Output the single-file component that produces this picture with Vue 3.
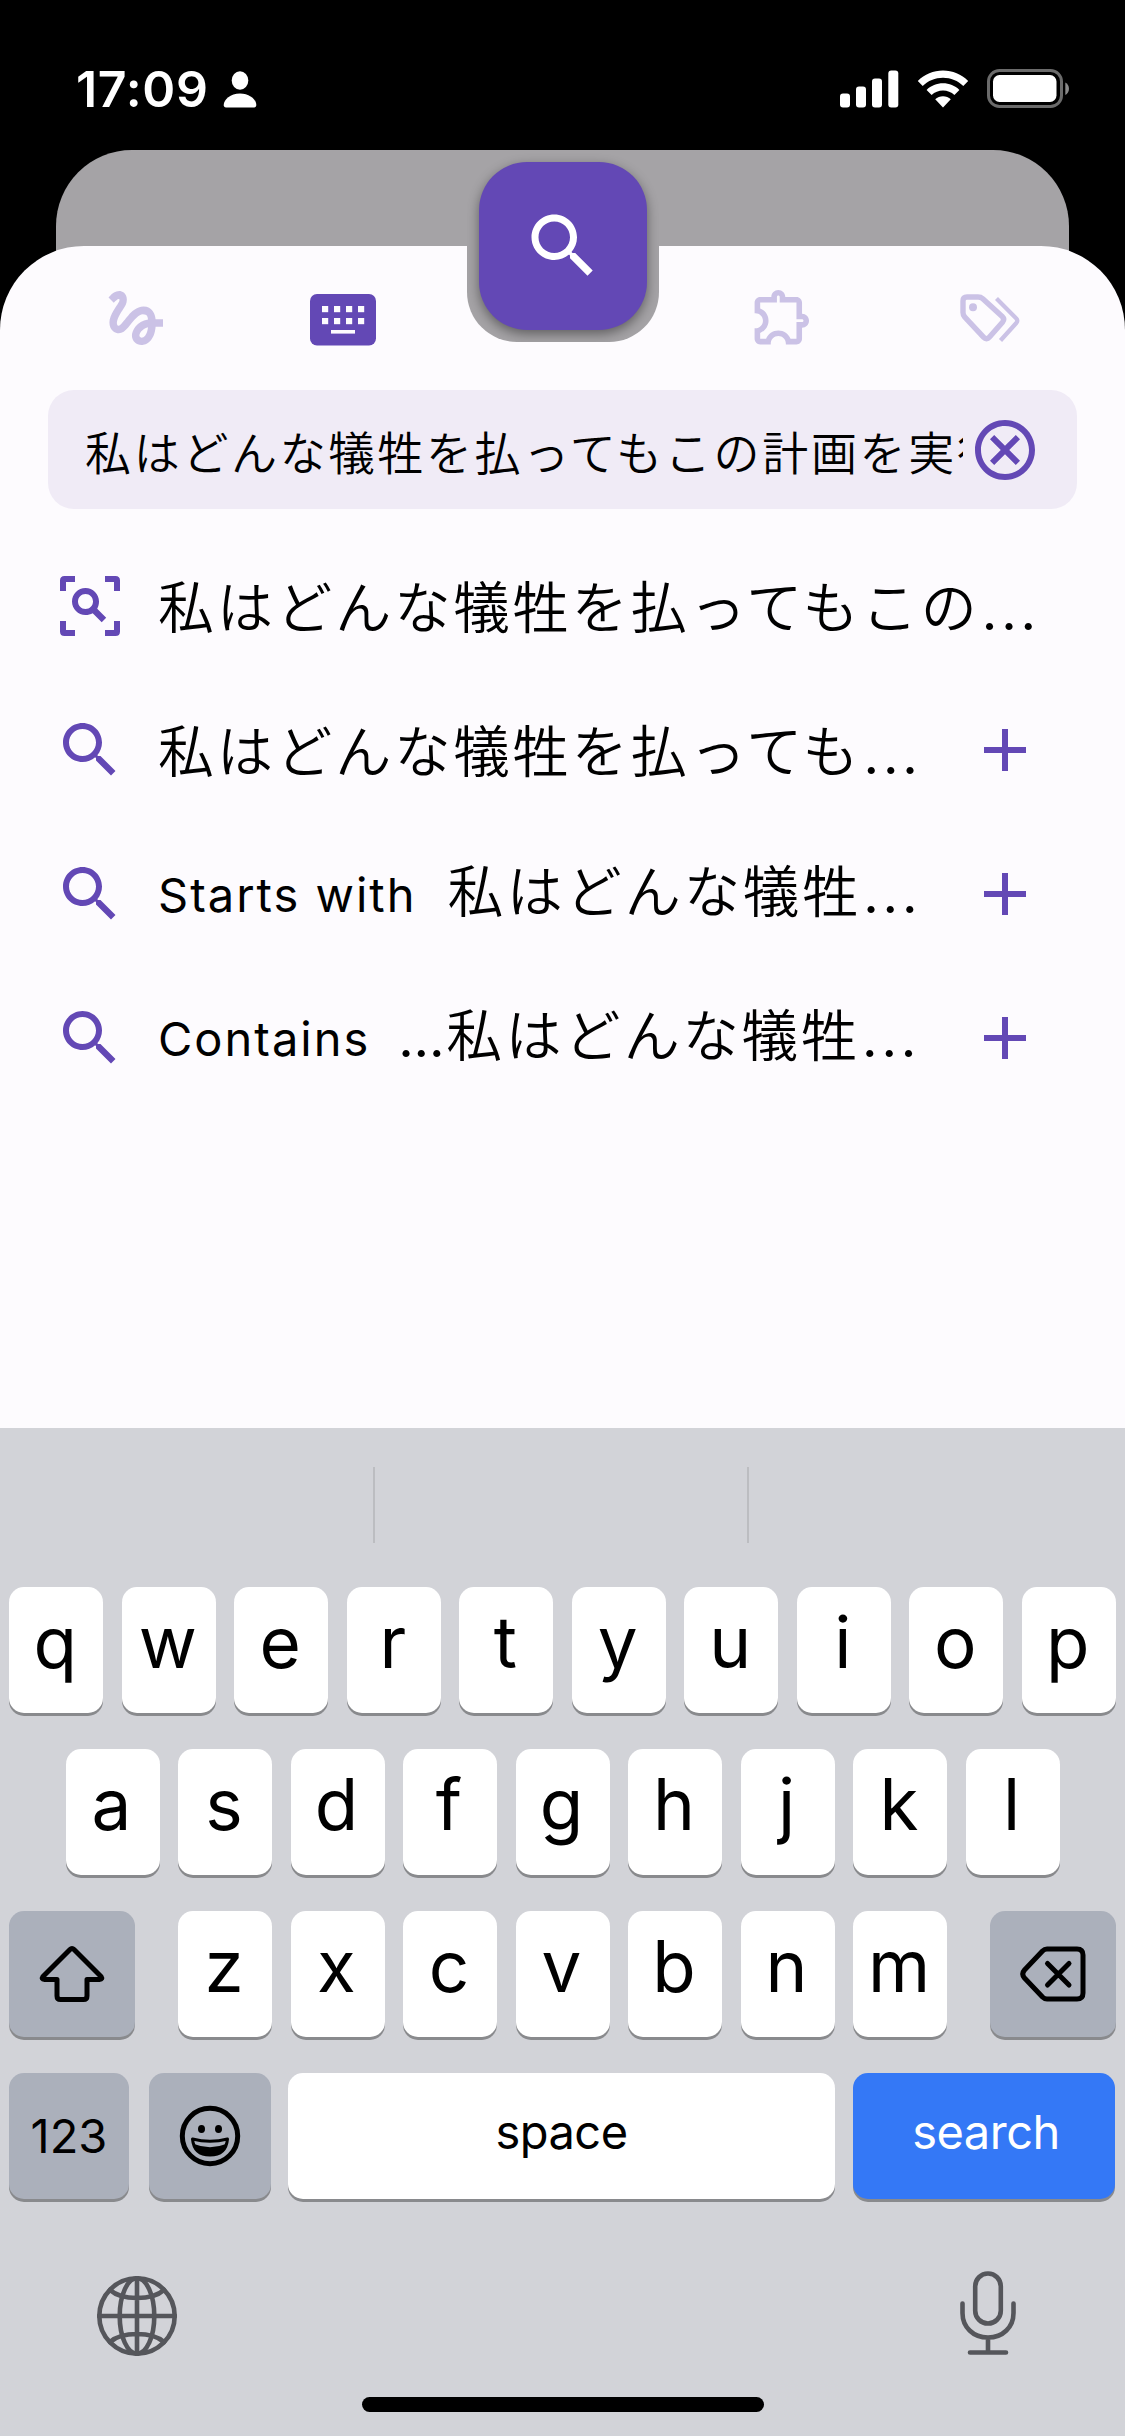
<template>
  <div class="phone">
    <header class="status">
      <span class="status__time">17:09</span>
      <svg class="status__person" width="34" height="37" viewBox="0 0 34 37" aria-hidden="true">
        <ellipse cx="17" cy="9.5" rx="8.3" ry="9.2" />
        <path d="M17 22.5C26.5 22.5 33.3 28.5 33.3 34C33.3 35.6 32.5 36.5 31 36.5H3C1.5 36.5.7 35.6.7 34C.7 28.5 7.5 22.5 17 22.5z" />
      </svg>
      <span class="status__fill"></span>
      <svg class="status__signal" width="59" height="38" viewBox="0 0 59 38" aria-hidden="true">
        <rect x="0" y="23.5" width="10" height="14" rx="3" />
        <rect x="16" y="16.5" width="10" height="21" rx="3" />
        <rect x="32" y="8.5" width="10" height="29" rx="3" />
        <rect x="48.3" y=".5" width="10" height="37" rx="3" />
      </svg>
      <svg class="status__wifi" width="52" height="38" viewBox="0 0 52 38" aria-hidden="true">
        <path d="M26 .5C35.5 .5 44.5 4.2 51.2 11L46.3 16.1C41 10.8 33.8 7.8 26 7.8S11 10.8 5.7 16.1L.8 11C7.5 4.2 16.5 .5 26 .5z" />
        <path d="M26 13.3C32.2 13.3 38 15.7 42.4 19.9L37.4 25.1C34.3 22.2 30.3 20.6 26 20.6S17.7 22.2 14.6 25.1L9.6 19.9C14 15.7 19.8 13.3 26 13.3z" />
        <path d="M26 26.2C28.9 26.2 31.7 27.4 33.8 29.3L26 37.5L18.2 29.3C20.3 27.4 23.1 26.2 26 26.2z" />
      </svg>
      <svg class="status__battery" width="84" height="40" viewBox="0 0 84 40" aria-hidden="true">
        <rect x="1.5" y="1.5" width="73" height="36" rx="11" fill="none" stroke="#6b6b6b" stroke-width="3" />
        <rect x="6" y="6" width="63.5" height="27" rx="6.5" fill="#fff" />
        <path d="M78.3 13.5C80.5 14.5 82 16.8 82 19.8S80.5 25 78.3 26z" fill="#8a8a8a" />
      </svg>
    </header>

    <div class="backdrop"></div>

    <main class="sheet">
      <div class="notch">
        <button class="notch__fab" type="button" aria-label="Search">
          <svg width="84" height="84" viewBox="0 0 24 24"><path :d="icons.search" /></svg>
        </button>
      </div>

      <nav class="tabs">
        <button class="tab" type="button" aria-label="Draw">
          <svg width="72" height="72" viewBox="0 0 24 24"><path :d="icons.gesture" /></svg>
        </button>
        <button class="tab tab--active" type="button" aria-label="Keyboard">
          <svg width="66" height="52" viewBox="0 0 66 52">
            <rect width="66" height="51.5" rx="7" />
            <g fill="#fdfbfe">
              <template v-for="col in 4" :key="col">
                <rect :x="12 * col" y="12" width="6.2" height="6.2" />
                <rect :x="12 * col" y="24" width="6.2" height="6.2" />
              </template>
              <rect x="21" y="36" width="24" height="3.6" />
            </g>
          </svg>
        </button>
        <span class="tabs__gap"></span>
        <button class="tab tab--puzzle" type="button" aria-label="Components">
          <svg width="67" height="67" viewBox="0 0 24 24"><path :d="icons.puzzle" /></svg>
        </button>
        <button class="tab tab--tags" type="button" aria-label="Tags">
          <svg width="62" height="52" viewBox="0 0 62 52">
            <path d="M4 9Q4 5 8 5H19Q21.8 5 23.8 6.7L43.2 24.5Q46 27.2 43.5 30.2L30.5 45Q27.5 48.4 24.5 45.2L5.6 24.8Q4 23 4 20.5z" stroke-width="5.4" />
            <circle cx="14" cy="15.3" r="4" fill="currentColor" stroke="none" />
            <path d="M37.5 6.5L57.3 26.5Q59.3 28.7 57.3 31L41.5 48.5" stroke-width="4.2" />
          </svg>
        </button>
      </nav>

      <div class="field">
        <div class="field__text">私はどんな犠牲を払ってもこの計画を実行</div>
        <svg class="field__clear" width="72" height="72" viewBox="0 0 24 24"><path :d="icons.cancel" /></svg>
      </div>

      <ul class="results">
        <li v-for="(row, i) in results" :key="i" class="result" :class="{ 'result--labelled': row.label }">
          <svg class="result__icon" width="72" height="72" viewBox="0 0 24 24">
            <path :d="row.scan ? icons.scan : icons.search" />
          </svg>
          <span v-if="row.label" class="result__label">{{ row.label }}</span>
          <span v-if="row.lead" class="result__lead">...</span>
          <span class="result__text">{{ row.text }}</span>
          <span class="result__dots">...</span>
          <svg v-if="!row.scan" class="result__add" width="72" height="72" viewBox="0 0 24 24">
            <path d="M19 13h-6v6h-2v-6H5v-2h6V5h2v6h6z" />
          </svg>
        </li>
      </ul>
    </main>

    <section class="keyboard">
      <div class="suggestions">
        <span v-for="n in 3" :key="n" class="suggestions__slot"></span>
      </div>

      <div class="keys">
        <button v-for="k in 'qwertyuiop'" :key="k" class="key" type="button"><span>{{ k }}</span></button>
      </div>
      <div class="keys">
        <button v-for="k in 'asdfghjkl'" :key="k" class="key" type="button"><span>{{ k }}</span></button>
      </div>
      <div class="keys keys--spread">
        <button class="key key--grey key--wide" type="button" aria-label="Shift">
          <svg width="66" height="58" viewBox="0 0 66 58">
            <path d="M31 4.5Q33 2.5 35 4.5L62 31.5Q64 34.5 60.5 34.5H48V51Q48 54.5 44.5 54.5H21.5Q18 54.5 18 51V34.5H5.5Q2 34.5 4 31.5z" />
          </svg>
        </button>
        <div class="keys__group">
          <button v-for="k in 'zxcvbnm'" :key="k" class="key" type="button"><span>{{ k }}</span></button>
        </div>
        <button class="key key--grey key--wide" type="button" aria-label="Delete">
          <svg width="66" height="58" viewBox="0 0 66 58">
            <path d="M27 4H57Q63 4 63 10V48Q63 54 57 54H27Q24.5 54 22.5 52L4.5 33Q1 29 4.5 25L22.5 6Q24.5 4 27 4z" />
            <path d="M27.5 18.5L49 40M49 18.5L27.5 40" />
          </svg>
        </button>
      </div>
      <div class="keys keys--bottom">
        <button class="key key--grey key--123" type="button"><span>123</span></button>
        <button class="key key--grey key--emoji" type="button" aria-label="Emoji">
          <svg width="62" height="62" viewBox="0 0 62 62">
            <circle cx="31" cy="31" r="27.7" />
            <ellipse cx="22.5" cy="24" rx="3.5" ry="4" fill="#000" stroke="none" />
            <ellipse cx="39.5" cy="24" rx="3.5" ry="4" fill="#000" stroke="none" />
            <path d="M13.5 34Q31 38.5 48.5 34Q47 50 31 50T13.5 34z" stroke-width="3" />
            <path class="key__mouth" d="M15 39Q31 45.500 47 39Q43 50 31 50T15 39z" />
          </svg>
        </button>
        <button class="key key--space" type="button"><span>space</span></button>
        <button class="key key--search" type="button"><span>search</span></button>
      </div>

      <footer class="dock">
        <svg class="dock__globe" width="80" height="80" viewBox="0 0 80 80">
          <circle cx="40" cy="40" r="37.7" />
          <ellipse cx="40" cy="40" rx="17.3" ry="37.7" />
          <path d="M40 2V78M2 40H78M13 14Q22 22 40 22T67 14M13 66Q22 58 40 58T67 66" />
        </svg>
        <svg width="58" height="86" viewBox="0 0 58 86">
          <rect x="16.2" y="2.5" width="25.6" height="50" rx="12.8" />
          <path d="M3.5 32.5V42C3.5 56 14 66.5 29 66.5S54.5 56 54.5 42V32.5M29 66.5V81.5M11 81.5H47" />
        </svg>
      </footer>
      <div class="home-bar"></div>
    </section>
  </div>
</template>

<script setup>
const results = [
  { text: '私はどんな犠牲を払ってもこの', scan: true },
  { text: '私はどんな犠牲を払っても' },
  { label: 'Starts with', text: '私はどんな犠牲' },
  { label: 'Contains', lead: true, text: '私はどんな犠牲' }
];

const icons = {
  search:
    'M15.5 14h-.79l-.28-.27C15.41 12.59 16 11.11 16 9.5 16 5.91 13.09 3 9.5 3S3 5.91 3 9.5 5.91 16 9.5 16c1.61 0 3.09-.59 4.23-1.57l.27.28v.79l5 4.99L20.49 19l-4.99-5zm-6 0C7.01 14 5 11.99 5 9.5S7.01 5 9.5 5 14 7.01 14 9.5 11.99 14 9.5 14z',
  scan:
    'M7 2v2H4v3H2V3.5Q2 2 3.5 2zM17 2v2h3v3h2V3.5Q22 2 20.5 2zM7 22v-2H4v-3H2v3.5Q2 22 3.5 22zM17 22v-2h3v-3h2v3.5Q22 22 20.5 22zM17.4 15.9l-3-3c.4-.7.6-1.5.6-2.4C15 8 13 6 10.5 6S6 8 6 10.5 8 15 10.5 15c.9 0 1.7-.2 2.4-.6l3 3zM10.5 13C9.1 13 8 11.9 8 10.5S9.1 8 10.5 8 13 9.1 13 10.5 11.9 13 10.5 13z',
  cancel:
    'M12 2C6.47 2 2 6.47 2 12s4.47 10 10 10 10-4.47 10-10S17.53 2 12 2zm0 18c-4.41 0-8-3.59-8-8s3.59-8 8-8 8 3.59 8 8-3.59 8-8 8zm3.59-13L12 10.59 8.41 7 7 8.41 10.59 12 7 15.59 8.41 17 12 13.41 15.59 17 17 15.59 13.41 12 17 8.41z',
  gesture:
    'M4.59 6.89c.7-.71 1.4-1.35 1.71-1.22.5.2 0 1.03-.3 1.52-.25.42-2.86 3.89-2.86 6.31 0 1.28.48 2.34 1.34 2.98.75.56 1.74.73 2.64.46 1.07-.31 1.95-1.4 3.06-2.77 1.21-1.49 2.83-3.44 4.08-3.44 1.63 0 1.65 1.01 1.76 1.79-3.78.64-5.38 3.67-5.38 5.37 0 1.7 1.44 3.09 3.21 3.09 1.63 0 4.29-1.33 4.69-6.1H21v-2.5h-2.47c-.15-1.65-1.09-4.2-4.03-4.2-2.25 0-4.18 1.91-4.94 2.84-.58.73-2.06 2.48-2.29 2.72-.25.3-.68.84-1.11.84-.45 0-.72-.83-.36-1.92.35-1.09 1.4-2.86 1.85-3.52.78-1.14 1.3-1.92 1.3-3.28C8.95 3.69 7.31 3 6.44 3 5.12 3 3.97 4 3.72 4.25c-.36.36-.66.66-.88.93l1.75 1.71zm9.29 11.66c-.31 0-.74-.26-.74-.72 0-.6.73-2.2 2.87-2.76-.3 2.69-1.43 3.48-2.13 3.48z',
  puzzle:
    'M10.5 4.5c.28 0 .5.22.5.5v2h6v6h2c.28 0 .5.22.5.5s-.22.5-.5.5h-2v6h-2.12c-.68-1.75-2.39-3-4.38-3s-3.7 1.25-4.38 3H4v-2.12c1.75-.68 3-2.39 3-4.38 0-1.99-1.24-3.7-2.99-4.38L4 7h6V5c0-.28.22-.5.5-.5m0-2C9.12 2.5 8 3.62 8 5H4c-1.1 0-1.99.9-1.99 2v3.8h.29c1.49 0 2.7 1.21 2.7 2.7s-1.21 2.7-2.7 2.7H2V20c0 1.1.9 2 2 2h3.8v-.3c0-1.49 1.21-2.7 2.7-2.7s2.7 1.21 2.7 2.7v.3H17c1.1 0 2-.9 2-2v-4c1.38 0 2.5-1.12 2.5-2.5S20.38 11 19 11V7c0-1.1-.9-2-2-2h-4c0-1.38-1.12-2.5-2.5-2.5z'
};
</script>

<style>
body {
  background: #000;
}
</style>

<style scoped>
.phone {
  --accent: #6348b5;
  --surface: #fdfbfe;
  width: 1125px;
  height: 2436px;
  display: flex;
  flex-direction: column;
  overflow: hidden;
  background: #000;
  font-family: Inter, "Noto Sans CJK JP", sans-serif;
  color: #000;
}

.phone *,
.phone {
  box-sizing: border-box;
}

button {
  border: 0;
  padding: 0;
  background: none;
  font: inherit;
  color: inherit;
}

svg {
  display: block;
  flex-shrink: 0;
  fill: currentColor;
}

/* Status bar */
.status {
  height: 150px;
  padding: 69px 56px 0 76px;
  display: flex;
  align-items: flex-start;
  color: #fff;
}

.status__time {
  font-size: 50px;
  font-weight: 600;
  line-height: 40px;
  width: 147px;
  white-space: nowrap;
  letter-spacing: 0.7px;
}

.status__person {
  margin-top: 2px;
}

.status__fill {
  flex: 1;
}

.status__signal {
  margin: 1px 18px 0 0;
}

.status__wifi {
  margin: 1px 18px 0 0;
}

.status__battery {
  margin-right: -2px;
}

/* Card behind the sheet */
.backdrop {
  height: 180px;
  margin: 0 56px -84px;
  flex-shrink: 0;
  border-radius: 76px 76px 0 0;
  background: #a5a3a6;
}

.sheet {
  position: relative;
  height: 1182px;
  flex-shrink: 0;
  border-radius: 84px 84px 0 0;
  background: var(--surface);
}

.notch {
  position: absolute;
  left: 466.5px;
  top: -96px;
  width: 192px;
  height: 192px;
  padding: 12px;
  border-radius: 0 0 50px 50px;
  background: #a5a3a6;
  overflow: hidden;
}

.notch__fab {
  width: 168px;
  height: 168px;
  border-radius: 48px;
  display: flex;
  align-items: center;
  justify-content: center;
  background: var(--accent);
  color: #fff;
  box-shadow: 0 4px 12px rgba(0, 0, 0, 0.42);
}

.tabs {
  height: 144px;
  padding: 0 32px;
  display: flex;
  align-items: center;
}

.tab {
  width: 207px;
  display: flex;
  justify-content: center;
  color: #cbc2e6;
}

.tab--active {
  padding-top: 3px;
  color: var(--accent);
}

.tab--puzzle {
  padding-bottom: 4px;
}

.tab--tags svg {
  fill: none;
  stroke: currentColor;
  stroke-linejoin: round;
}

.tabs__gap {
  flex: 1;
}

.field {
  height: 119px;
  margin: 0 48px;
  padding: 0 36px 0 37px;
  display: flex;
  align-items: center;
  border-radius: 26px;
  background: #f0ebf6;
}

.field__text {
  width: 878px;
  flex-shrink: 0;
  overflow: hidden;
  white-space: nowrap;
  font-family: "Noto Sans CJK JP", sans-serif;
  font-size: 46px;
  font-weight: 350;
  letter-spacing: 2.7px;
  line-height: 72px;
  padding-top: 1px;
}

.field__clear {
  margin: 1px 0 0 6px;
  color: var(--accent);
}

.results {
  list-style: none;
  margin: 0;
  padding: 25px 84px 0 54px;
}

.result {
  height: 144px;
  display: flex;
  align-items: center;
}

.result__icon {
  margin-right: 32px;
  color: var(--accent);
}

.result__label {
  font-size: 47px;
  font-weight: 370;
  line-height: 72px;
  letter-spacing: 2px;
  margin-right: 31px;
  padding-top: 2px;
  white-space: nowrap;
}

.result__text {
  font-family: "Noto Sans CJK JP", sans-serif;
  font-size: 56px;
  font-weight: 350;
  letter-spacing: 3.1px;
  line-height: 80px;
  padding-bottom: 4px;
  white-space: nowrap;
}

.result__dots,
.result__lead {
  font-size: 54px;
  line-height: 80px;
  letter-spacing: 3.8px;
  padding-top: 9px;
}

.result__dots {
  margin-left: 2px;
}

.result__lead {
  margin: 0 2px 0 -3px;
  letter-spacing: -0.2px;
}

.result--labelled .result__text {
  padding-bottom: 12px;
}

.result--labelled .result__dots,
.result--labelled .result__lead {
  padding-top: 0;
}

.result__add {
  margin-left: auto;
  color: var(--accent);
}

/* Keyboard */
.keyboard {
  flex: 1;
  display: flex;
  flex-direction: column;
  background: #d2d3d8;
}

.suggestions {
  height: 159px;
  padding: 39px 3px 0 0;
  display: flex;
}

.suggestions__slot {
  flex: 1;
  height: 76px;
}

.suggestions__slot + .suggestions__slot {
  border-left: 2px solid #bcbdc1;
}

.keys {
  height: 126px;
  margin-bottom: 36px;
  padding: 0 9px;
  display: flex;
  justify-content: center;
  gap: 18.5px;
}

.keys--spread {
  justify-content: space-between;
  gap: 0;
}

.keys__group {
  display: flex;
  gap: 18.5px;
}

.keys--bottom {
  justify-content: flex-start;
  gap: 18px;
  margin-bottom: 0;
}

.key {
  width: 94px;
  height: 126px;
  flex-shrink: 0;
  display: flex;
  align-items: center;
  justify-content: center;
  border-radius: 15px;
  background: #fff;
  box-shadow: 0 3px 0 #898a8d;
  font-size: 71px;
  font-weight: 370;
}

.key span {
  line-height: 80px;
  margin-top: -16px;
  margin-left: -2px;
}

.key svg {
  fill: none;
  stroke: #000;
  stroke-width: 5;
  stroke-linecap: round;
  stroke-linejoin: round;
}

.key .key__mouth {
  fill: #000;
  stroke: none;
}

.key--grey {
  background: #abb0bb;
}

.key--wide {
  width: 126px;
}

.key--123,
.key--space,
.key--search {
  font-size: 47px;
  font-weight: 380;
}

.key--123 {
  width: 120px;
}

.key--123 span {
  margin: 0;
}

.key--emoji {
  width: 122px;
  margin-left: 2px;
}

.key--space {
  width: 547px;
  margin-left: -1px;
}

.key--space span,
.key--search span {
  margin: -8px 0 0;
  letter-spacing: -0.5px;
}

.key--search span {
  margin-left: 4px;
}

.key--search {
  width: 262px;
  background: #3478f6;
  color: #fff;
}

.dock {
  margin-top: 72px;
  height: 86px;
  padding: 0 108px 0 97px;
  display: flex;
  align-items: center;
  justify-content: space-between;
}

.dock svg {
  fill: none;
  stroke: #55565b;
  stroke-width: 4.6;
  stroke-linecap: round;
}

.dock__globe {
  margin-top: 4px;
}

.home-bar {
  width: 402px;
  height: 15px;
  margin: 40px auto 0;
  border-radius: 8px;
  background: #000;
}
</style>
